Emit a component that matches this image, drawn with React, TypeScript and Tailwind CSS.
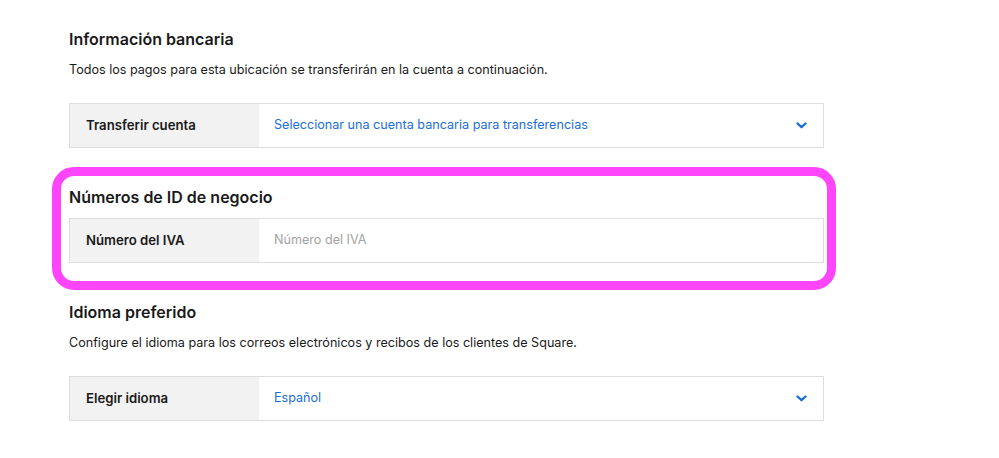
import { ReactNode } from "react";

function Chevron() {
  return (
    <svg width="11" height="7" viewBox="0 0 11 7" className="mr-[1px] shrink-0">
      <polyline
        points="1.5,1.5 5.5,5.2 9.5,1.5"
        fill="none"
        stroke="#1a6ed8"
        strokeWidth="2.3"
        strokeLinecap="round"
        strokeLinejoin="round"
      />
    </svg>
  );
}

function FieldRow({ label, children, select }: { label: string; children: ReactNode; select?: boolean }) {
  return (
    <div className="flex h-[45px] border border-[#dddddd]">
      <div className="flex w-[189px] items-center bg-[#f2f2f2] pl-[16px] text-[13.2px] font-semibold text-[#1a1a1a]">
        {label}
      </div>
      <div className="flex flex-1 items-center justify-between bg-white pl-[15px] pr-[15px] text-[12.6px]">
        {children}
        {select && <Chevron />}
      </div>
    </div>
  );
}

function SectionTitle({ children }: { children: ReactNode }) {
  return <h2 className="text-[16px] leading-[24px] font-semibold text-[#1a1a1a]">{children}</h2>;
}

function Description({ children }: { children: ReactNode }) {
  return <p className="mt-[9px] text-[12.6px] leading-[20px] text-[#1a1a1a]">{children}</p>;
}

export default function App() {
  return (
    <div className="min-h-[458px] w-[999px] bg-white font-['Inter',sans-serif] antialiased">
      <div className="ml-[69px] w-[755px] pt-[27px]">
        <section>
          <SectionTitle>Información bancaria</SectionTitle>
          <Description>
            Todos los pagos para esta ubicación se transferirán en la cuenta a continuación.
          </Description>
          <div className="mt-[23px]">
            <FieldRow label="Transferir cuenta" select>
              <span className="text-[#1a6ed8]">Seleccionar una cuenta bancaria para transferencias</span>
            </FieldRow>
          </div>
        </section>

        <section className="relative mt-[37px]">
          <SectionTitle>Números de ID de negocio</SectionTitle>
          <div className="mt-[9px]">
            <FieldRow label="Número del IVA">
              <input
                className="w-full bg-transparent text-[12.6px] text-[#1a1a1a] outline-none placeholder:text-[#a3a3a3]"
                placeholder="Número del IVA"
              />
            </FieldRow>
          </div>
          <div className="pointer-events-none absolute -top-[18px] -bottom-[27px] -left-[17px] -right-[12px] rounded-[22px] border-[9px] border-[#ff45fc]" />
        </section>

        <section className="mt-[37px]">
          <SectionTitle>Idioma preferido</SectionTitle>
          <Description>
            Configure el idioma para los correos electrónicos y recibos de los clientes de Square.
          </Description>
          <div className="mt-[23px]">
            <FieldRow label="Elegir idioma" select>
              <span className="text-[#1a6ed8]">Español</span>
            </FieldRow>
          </div>
        </section>
      </div>
    </div>
  );
}
